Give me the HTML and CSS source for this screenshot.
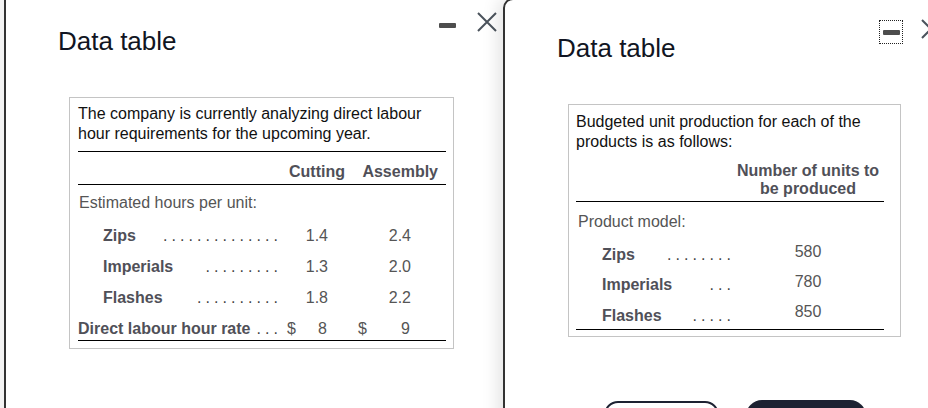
FILE: index.html
```html
<!DOCTYPE html>
<html lang="en">
<head>
<meta charset="utf-8">
<title>Data table</title>
<link rel="stylesheet" href="styles.css">
</head>
<body>
<div class="desk">
  <section class="win win-left">
    <header class="win-head">
      <h2 class="win-title">Data table</h2>
      <div class="win-ctrls">
        <button class="ctrl ctrl-min" aria-label="Minimize"><span class="bar"></span></button>
        <button class="ctrl ctrl-close" aria-label="Close"><svg width="24" height="24" viewBox="0 0 24 24"><path d="M3 3L21 21M21 3L3 21" stroke="#4b535c" stroke-width="2" fill="none"/></svg></button>
      </div>
    </header>
    <div class="win-body">
      <div class="dt dt-left">
        <p class="dt-intro">The company is currently analyzing direct labour hour requirements for the upcoming year.</p>
        <table class="grid grid-hours">
          <colgroup><col class="c-label"><col class="c-cut"><col class="c-asm"></colgroup>
          <thead>
            <tr><th></th><th class="h-cut">Cutting</th><th class="h-asm">Assembly</th></tr>
          </thead>
          <tbody>
            <tr class="r-sec"><td colspan="3">Estimated hours per unit:</td></tr>
            <tr class="r-item"><td class="lbl"><div class="lead"><b>Zips</b><span class="dots">..............</span></div></td><td class="n-cut">1.4</td><td class="n-asm">2.4</td></tr>
            <tr class="r-item"><td class="lbl"><div class="lead"><b>Imperials</b><span class="dots">.........</span></div></td><td class="n-cut">1.3</td><td class="n-asm">2.0</td></tr>
            <tr class="r-item"><td class="lbl"><div class="lead"><b>Flashes</b><span class="dots">..........</span></div></td><td class="n-cut">1.8</td><td class="n-asm">2.2</td></tr>
            <tr class="r-rate"><td class="lbl"><div class="lead"><b>Direct labour hour rate</b><span class="dots">...</span></div></td><td class="m-cut"><span class="cur">$</span>8</td><td class="m-asm"><span class="cur">$</span>9</td></tr>
          </tbody>
        </table>
      </div>
    </div>
  </section>

  <section class="win win-right">
    <header class="win-head">
      <h2 class="win-title">Data table</h2>
      <div class="win-ctrls">
        <button class="ctrl ctrl-min is-focus" aria-label="Minimize"><span class="bar"></span></button>
        <button class="ctrl ctrl-close" aria-label="Close"><svg width="24" height="24" viewBox="0 0 24 24"><path d="M3 3L21 21M21 3L3 21" stroke="#4b535c" stroke-width="2" fill="none"/></svg></button>
      </div>
    </header>
    <div class="win-body">
      <div class="dt dt-right">
        <p class="dt-intro2">Budgeted unit production for each of the products is as follows:</p>
        <table class="grid grid-units">
          <colgroup><col class="c-model"><col class="c-units"></colgroup>
          <thead>
            <tr><th></th><th class="h-units">Number of units to be produced</th></tr>
          </thead>
          <tbody>
            <tr class="r-sec"><td colspan="2">Product model:</td></tr>
            <tr class="r-item"><td class="lbl"><div class="lead"><b>Zips</b><span class="dots">........</span></div></td><td class="n-units">580</td></tr>
            <tr class="r-item"><td class="lbl"><div class="lead"><b>Imperials</b><span class="dots">...</span></div></td><td class="n-units">780</td></tr>
            <tr class="r-item r-last"><td class="lbl"><div class="lead"><b>Flashes</b><span class="dots">.....</span></div></td><td class="n-units">850</td></tr>
          </tbody>
        </table>
      </div>
      <div class="win-foot">
        <button class="btn btn-outline" aria-label="Print"></button>
        <button class="btn btn-solid" aria-label="Done"></button>
      </div>
    </div>
  </section>
</div>
</body>
</html>
```

FILE: styles.css
```css
* { box-sizing: border-box; }
html, body { margin: 0; padding: 0; height: 100%; overflow: hidden; }
body {
  background: #f3f3f3;
  font-family: "Liberation Sans", Arial, sans-serif;
  color: #111;
}
.desk { position: relative; width: 928px; height: 408px; overflow: hidden; }

.win {
  position: absolute;
  background: #fff;
  border: 2px solid #333;
}
.win-left { left: 4px; top: -9px; width: 509px; height: 440px; }
.win-right {
  left: 503px; top: -2px; width: 454px; height: 460px;
  border-radius: 10px;
  box-shadow: -6px 0 16px rgba(0, 0, 0, 0.10);
}

.win-head {
  display: flex;
  align-items: flex-start;
  padding: 20px 12px 0 52px;
}
.win-title {
  margin: 13px 0 0 0;
  font-size: 26px;
  line-height: 30px;
  font-weight: normal;
  color: #111522;
}
.win-ctrls { margin-left: auto; display: flex; gap: 16px; }
.ctrl {
  width: 24px; height: 24px;
  padding: 0; margin: 0;
  border: 1px solid transparent;
  background: transparent;
  display: flex; align-items: center; justify-content: center;
}
.ctrl-close { margin-top: -3px; border: 0; }
.ctrl-close svg { display: block; }
.ctrl .bar { display: block; width: 17px; height: 5px; background: #4d4d4d; border-radius: 1px; }
.ctrl.is-focus { border: 1px dotted #222; }

.win-body { padding: 41px 0 0 63px; }

.dt { border: 1px solid #c4c4c4; background: #fff; }
.dt-left { width: 385px; padding: 6px 7px 7px 8px; }
.dt-right { width: 333px; padding: 7px 16px 6px 7px; }

.dt-intro, .dt-intro2 {
  margin: 0;
  font-size: 16px;
  line-height: 20px;
  color: #111;
}
.dt-intro { padding-bottom: 7px; border-bottom: 1px solid #000; }

.grid {
  width: 100%;
  border-collapse: collapse;
  table-layout: fixed;
  font-size: 16px;
  line-height: 20px;
  color: #555;
}
.grid th { font-weight: bold; color: #505058; padding: 0; }
.grid td { padding: 0; }
.grid b { font-weight: bold; color: #505058; }

.lead { display: flex; align-items: baseline; }
.dots { margin-left: auto; margin-right: -4px; letter-spacing: 4.05px; color: #444; }

/* left table */
.c-label { width: 204px; }
.c-cut { width: 68px; }
.c-asm { width: 96px; }
.grid-hours thead th {
  padding: 10px 0 2px;
  border-bottom: 1px solid #000;
  text-align: right;
}
.grid-hours thead .h-cut { padding-right: 5px; }
.grid-hours thead .h-asm { padding-right: 8px; }
.grid-hours .r-sec td { padding: 8px 0 8px 1px; }
.grid-hours .r-item td { padding: 5px 0 6px; text-align: right; }
.grid-hours .r-item td.lbl { padding-left: 25px; padding-right: 4px; text-align: left; }
.grid-hours .r-item td.n-cut { padding-right: 22px; }
.grid-hours .r-item td.n-asm { padding-right: 35px; }
.grid-hours .r-rate td { padding: 5px 0 1px; border-bottom: 1px solid #000; text-align: right; }
.grid-hours .r-rate td.lbl { padding-right: 4px; text-align: left; }
.grid-hours .r-rate td.m-cut { padding-left: 5px; padding-right: 23px; }
.grid-hours .r-rate td.m-asm { padding-left: 8px; padding-right: 36px; }
.cur { float: left; color: #555; }

/* right table */
.c-model { width: 156px; }
.c-units { width: 152px; }
.grid-units thead th {
  padding: 10px 0 3px;
  line-height: 18px;
  border-bottom: 1px solid #000;
  text-align: center;
}
.grid-units .r-sec td { padding: 10px 0 8px 2px; }
.grid-units .r-item td { padding: 5px 0 5px; }
.grid-units .r-item td.lbl { padding-left: 26px; padding-right: 1px; }
.grid-units .r-item td.n-units { text-align: center; vertical-align: top; padding-top: 2px; }
.grid-units .r-last td { border-bottom: 1px solid #000; }
.grid-units .r-last td.lbl { padding-top: 6px; padding-bottom: 3px; }

/* footer */
.win-foot { display: flex; align-items: flex-start; gap: 27px; margin-top: 63px; padding-left: 36px; }
.btn { display: block; padding: 0; height: 44px; }
.btn-outline { width: 115px; margin-top: 1px; border: 2px solid #1d2232; border-radius: 14px; background: #fff; }
.btn-solid { width: 120px; border: 0; border-radius: 16px; background: #1d2232; }
```
